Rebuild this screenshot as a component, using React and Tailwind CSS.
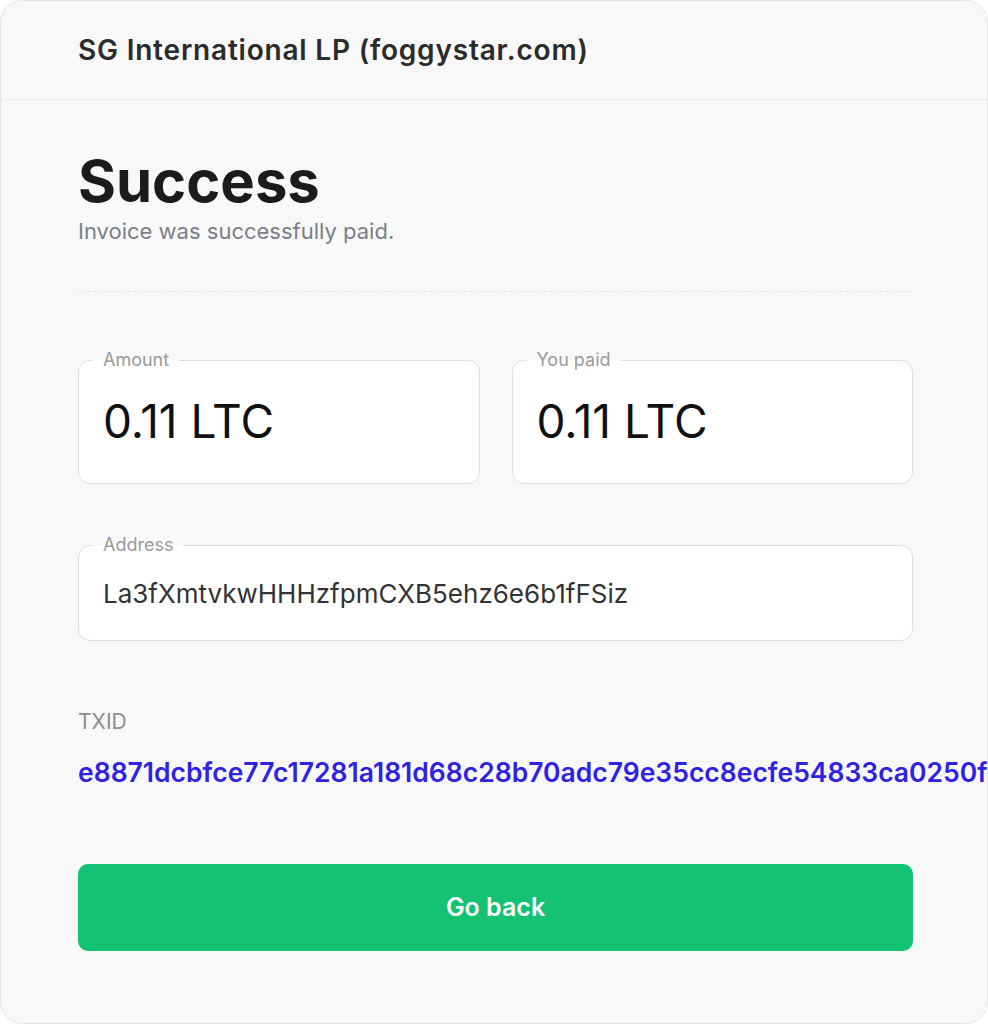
export default function App() {
  const txid = "e8871dcbfce77c17281a181d68c28b70adc79e35cc8ecfe54833ca0250fc";

  return (
    <div className="w-[988px] h-[1024px] bg-white font-['Inter','Liberation_Sans',sans-serif]">
      <div className="h-full flex flex-col bg-[#f8f8f8] border border-[#e6e6e6] rounded-[22px] overflow-hidden">
        {/* Header */}
        <div className="h-[99px] shrink-0 flex items-center px-[77px] border-b border-[#ebebeb]">
          <h1 className="text-[28px] font-semibold text-[#2b2b2b] tracking-[0.8px]">
            SG International LP (foggystar.com)
          </h1>
        </div>

        {/* Body */}
        <div className="pl-[77px] pr-[74px] pt-[49px]">
          <h2 className="text-[58px] leading-[64px] font-bold text-[#1b1b1b]">Success</h2>
          <p className="text-[22px] leading-[28px] text-[#7b7f8a] mt-[4px]">Invoice was successfully paid.</p>

          <div className="mt-[46px] border-t border-dashed border-[#e3e3e3]"></div>

          {/* Amount & paid */}
          <div className="mt-[57px] grid grid-cols-2 gap-[32px]">
            <fieldset className="h-[135px] border border-[#dedede] rounded-[12px] bg-white px-[14px]">
              <legend className="px-[10px] text-[18px] leading-[22px] text-[#9b9b9b]">Amount</legend>
              <div className="pl-[10px] text-[46px] leading-[56px] text-[#111111] mt-[22px]">0.11 LTC</div>
            </fieldset>
            <fieldset className="h-[135px] border border-[#dedede] rounded-[12px] bg-white px-[14px]">
              <legend className="px-[10px] text-[18px] leading-[22px] text-[#9b9b9b]">You paid</legend>
              <div className="pl-[10px] text-[46px] leading-[56px] text-[#111111] mt-[22px]">0.11 LTC</div>
            </fieldset>
          </div>

          {/* Address */}
          <fieldset className="mt-[50px] h-[107px] border border-[#dedede] rounded-[12px] bg-white px-[14px]">
            <legend className="px-[10px] text-[18px] leading-[22px] text-[#9b9b9b]">Address</legend>
            <div className="pl-[10px] text-[26px] leading-[32px] text-[#333333] mt-[22px]">
              La3fXmtvkwHHHzfpmCXB5ehz6e6b1fFSiz
            </div>
          </fieldset>

          {/* TXID */}
          <div className="mt-[67px] text-[21px] leading-[28px] text-[#8d8d8d]">TXID</div>
          <div className="mt-[20px] text-[26.5px] leading-[32px] font-semibold text-[#2f22e3] whitespace-nowrap">{txid}</div>

          {/* Button */}
          <button className="mt-[76px] w-full h-[87px] rounded-[10px] bg-[#14c273] text-white text-[25px] font-semibold">
            Go back
          </button>
        </div>
      </div>
    </div>
  );
}
